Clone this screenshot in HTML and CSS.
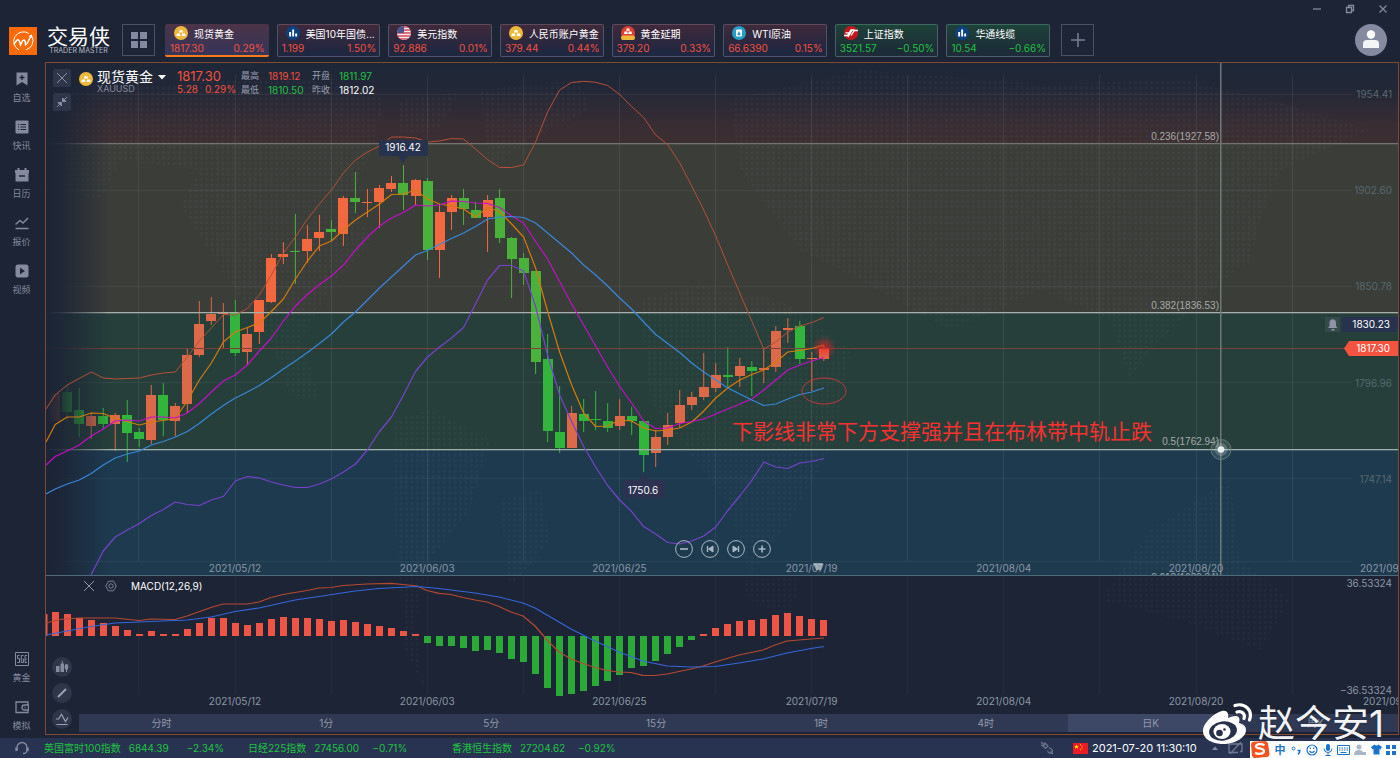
FILE: index.html
```html
<!DOCTYPE html>
<html lang="zh-CN">
<head>
<meta charset="utf-8">
<title>交易侠</title>
<link rel="stylesheet" href="styles.css">
</head>
<body>
<div class="app">
  <header class="header">
    <div class="titlebar">
      <button class="win-btn" aria-label="最小化"><svg width="10" height="10" viewBox="0 0 10 10"><path d="M1 5h8"/></svg></button>
      <button class="win-btn" aria-label="还原"><svg width="10" height="10" viewBox="0 0 10 10"><path d="M1.5 3.500h5v5h-5zM3.500 3.500v-2h5v5h-2"/></svg></button>
      <button class="win-btn" aria-label="关闭"><svg width="10" height="10" viewBox="0 0 10 10"><path d="M1.500 1.500l7 7M8.500 1.500l-7 7"/></svg></button>
    </div>
    <div class="toolbar">
      <div class="brand">
        <svg class="brand-mark" width="28" height="28" viewBox="0 0 28 28"><rect width="28" height="28" fill="#ff6a08"/><path d="M23 9.500A9.800 9.500 0 0 1 17 22.800M10 22.800A9.800 9.500 0 1 1 20 6.500" fill="none" stroke="#fff" stroke-width="1"/><path d="M5 17.500Q8 12 9.500 13t2 5.500q2-6 3.500-5.500t1.500 5Q19 16 22 8.500" fill="none" stroke="#fff" stroke-width="1.500" stroke-linejoin="round"/><path d="M19.500 9l3.500-1.500.2 3.800z" fill="#fff"/></svg>
        <div class="brand-text"><span class="brand-name">交易侠</span><span class="brand-sub">TRADER MASTER</span></div>
      </div>
      <button class="square-btn" aria-label="布局"><svg width="18" height="18" viewBox="0 0 18 18" fill="#8389a0"><path d="M1 1h7v7H1zM10 1h7v7h-7zM1 10h7v7H1zM10 10h7v7h-7z"/></svg></button>
      <nav class="tickers">
        <button class="ticker up current"><span class="t-top"><svg class="t-icon" viewBox="0 0 14 14"><use href="#i-gold"/></svg><span class="t-name">现货黄金</span></span><span class="t-row"><span>1817.30</span><span>0.29%</span></span></button>
        <button class="ticker up"><span class="t-top"><svg class="t-icon" viewBox="0 0 14 14"><use href="#i-bars"/></svg><span class="t-name">美国10年国债...</span></span><span class="t-row"><span>1.199</span><span>1.50%</span></span></button>
        <button class="ticker up"><span class="t-top"><svg class="t-icon" viewBox="0 0 14 14"><use href="#i-usa"/></svg><span class="t-name">美元指数</span></span><span class="t-row"><span>92.886</span><span>0.01%</span></span></button>
        <button class="ticker up"><span class="t-top"><svg class="t-icon" viewBox="0 0 14 14"><use href="#i-gold"/></svg><span class="t-name">人民币账户黄金</span></span><span class="t-row"><span>379.44</span><span>0.44%</span></span></button>
        <button class="ticker up"><span class="t-top"><svg class="t-icon" viewBox="0 0 14 14"><use href="#i-defer"/></svg><span class="t-name">黄金延期</span></span><span class="t-row"><span>379.20</span><span>0.33%</span></span></button>
        <button class="ticker up"><span class="t-top"><svg class="t-icon" viewBox="0 0 14 14"><use href="#i-oil"/></svg><span class="t-name">WTI原油</span></span><span class="t-row"><span>66.6390</span><span>0.15%</span></span></button>
        <button class="ticker down"><span class="t-top"><svg class="t-icon" viewBox="0 0 14 14"><use href="#i-sse"/></svg><span class="t-name">上证指数</span></span><span class="t-row"><span>3521.57</span><span>−0.50%</span></span></button>
        <button class="ticker down"><span class="t-top"><svg class="t-icon" viewBox="0 0 14 14"><use href="#i-bars"/></svg><span class="t-name">华通线缆</span></span><span class="t-row"><span>10.54</span><span>−0.66%</span></span></button>
      </nav>
      <button class="square-btn" aria-label="添加"><svg width="16" height="16" viewBox="0 0 16 16"><path d="M8 1v14M1 8h14" stroke="#7a8095" stroke-width="1.500"/></svg></button>
      <button class="avatar" aria-label="用户"><svg width="32" height="32" viewBox="0 0 32 32"><circle cx="16" cy="16" r="16" fill="#858aa1"/><circle cx="16" cy="10.500" r="4.200" fill="#fff"/><path d="M8 24v-4q0-4 4-4h8q4 0 4 4v4z" fill="#f3f4f6"/></svg></button>
    </div>
  </header>

  <div class="body">
    <nav class="sidebar">
      <a class="side-item" href="#watch"><svg width="14" height="14" viewBox="0 0 14 14"><path d="M1.500.5h11v13L7 10l-5.500 3.500z" fill="#858a9f"/><path d="M7 3v5M4.500 5.500h5" stroke="#1c2435" stroke-width="1.300"/></svg><span>自选</span></a>
      <a class="side-item" href="#news"><svg width="14" height="14" viewBox="0 0 14 14"><rect x=".5" y=".5" width="13" height="13" rx="1" fill="#858a9f"/><path d="M3 4.500h1.200M5.500 4.500H11M3 7h1.200M5.500 7H11M3 9.500h1.200M5.500 9.500H11" stroke="#1c2435" stroke-width="1.200"/></svg><span>快讯</span></a>
      <a class="side-item" href="#calendar"><svg width="14" height="14" viewBox="0 0 14 14"><path d="M0 5V2h2.500V0h2v2h5V0h2v2H14v3zM.5 5h13v8.500H.5z" fill="#858a9f"/><path d="M4 8h6" stroke="#1c2435" stroke-width="1.500"/></svg><span>日历</span></a>
      <a class="side-item" href="#quotes"><svg width="14" height="14" viewBox="0 0 14 14" fill="none" stroke="#858a9f" stroke-width="1.500"><path d="M.5 8.500l4.500-4 3 2.500 5-5M.5 12.500h13"/></svg><span>报价</span></a>
      <a class="side-item" href="#video"><svg width="14" height="14" viewBox="0 0 14 14"><rect x=".5" y=".5" width="13" height="13" rx="2.500" fill="#858a9f"/><path d="M5 3.800l5 3.200-5 3.200z" fill="#1c2435"/></svg><span>视频</span></a>
      <a class="side-item side-gap" href="#gold"><svg width="14" height="14" viewBox="0 0 14 14" fill="none" stroke="#858a9f" stroke-width="1"><path d="M.5.5h13v13H.5zM4.700 3.500H2.500v3h2v4H2.300M8.500 3.500H6.300v7h2.200V7H7.500M12 3.500h-2v7h2M10 7h1.800"/></svg><span>黄金</span></a>
      <a class="side-item" href="#sim"><svg width="14" height="14" viewBox="0 0 14 14" fill="none" stroke="#858a9f" stroke-width="1.300"><path d="M13 5V2H1v10.500h12V10M13.500 5H9.500a2.500 2.500 0 0 0 0 5h4zM9.500 7.500h1"/></svg><span>模拟</span></a>
    </nav>

    <main class="panel">
      <section class="price-pane">
        <svg id="price" class="chart" viewBox="46 63 1352 512" preserveAspectRatio="none" role="img" aria-label="现货黄金 日K"></svg>
        <div class="quote">
          <div class="quote-tools">
            <button class="tiny-btn" aria-label="关闭图表"><svg width="18" height="18" viewBox="0 0 18 18"><path d="M4 4l10 10M14 4L4 14"/></svg></button>
            <button class="tiny-btn" aria-label="缩小"><svg width="18" height="18" viewBox="0 0 18 18"><path d="M14 4l-3.500 3.500M4 14l3.500-3.500"/><path d="M9.500 5v3.500H13zM8.500 13V9.500H5z" fill="#8b90a5"/></svg></button>
          </div>
          <svg class="quote-icon" width="14" height="14" viewBox="0 0 14 14"><use href="#i-gold"/></svg>
          <div class="quote-name"><button class="symbol-btn">现货黄金<svg width="8" height="5" viewBox="0 0 8 5"><path d="M0 0h8L4 4.500z" fill="#fff"/></svg></button><span class="code">XAUUSD</span></div>
          <div class="quote-last red"><span class="last">1817.30</span><span class="chg"><span>5.28</span><span>0.29%</span></span></div>
          <dl class="ohlc">
            <dt>最高</dt><dd class="red">1819.12</dd><dt>开盘</dt><dd class="green">1811.97</dd>
            <dt>最低</dt><dd class="green">1810.50</dd><dt>昨收</dt><dd>1812.02</dd>
          </dl>
        </div>
        <div class="zoomer">
          <button aria-label="缩小图表"><svg width="18" height="18" viewBox="0 0 18 18"><circle cx="9" cy="9" r="8.400"/><path d="M5 9h8" stroke-width="1.600"/></svg></button>
          <button aria-label="向左"><svg width="18" height="18" viewBox="0 0 18 18"><circle cx="9" cy="9" r="8.400"/><path d="M6.500 6v6" stroke-width="1.400"/><path d="M12 6v6L7.500 9z" fill="#a9b8c4"/></svg></button>
          <button aria-label="向右"><svg width="18" height="18" viewBox="0 0 18 18"><circle cx="9" cy="9" r="8.400"/><path d="M11.500 6v6" stroke-width="1.400"/><path d="M6 6v6l4.500-3z" fill="#a9b8c4"/></svg></button>
          <button aria-label="放大图表"><svg width="18" height="18" viewBox="0 0 18 18"><circle cx="9" cy="9" r="8.400"/><path d="M5.500 9h7M9 5.500v7" stroke-width="1.600"/></svg></button>
        </div>
      </section>

      <section class="macd-pane">
        <svg id="macd" class="chart" viewBox="46 576 1352 138" preserveAspectRatio="none" role="img" aria-label="MACD"></svg>
        <div class="macd-head">
          <button class="plain" aria-label="移除指标"><svg width="12" height="12" viewBox="0 0 12 12" stroke="#9298ab" fill="none"><path d="M1 1l10 10M11 1L1 11"/></svg></button>
          <button class="plain" aria-label="设置"><svg width="12" height="12" viewBox="0 0 12 12" stroke="#7c8297" fill="none"><path d="M3.500 1.200h5L11.300 6l-2.800 4.800h-5L.7 6z"/><circle cx="6" cy="6" r="2.200"/></svg></button>
          <span>MACD(12,26,9)</span>
        </div>
        <div class="draw-tools">
          <button aria-label="图表类型"><svg width="20" height="20" viewBox="0 0 20 20" fill="#858a9f"><path d="M4 9h3.500v6H4zM8.500 6.500H12V15H8.500zM9.800 4h1v3h-1z"/><ellipse cx="14.500" cy="10" rx="1.800" ry="3"/><path d="M14 12h1v3h-1z"/></svg></button>
          <button aria-label="画线"><svg width="20" height="20" viewBox="0 0 20 20"><path d="M6 14l8-8" stroke="#9ba0b2" stroke-width="2"/></svg></button>
          <button aria-label="指标"><svg width="20" height="20" viewBox="0 0 20 20" fill="none" stroke="#9ba0b2" stroke-width="1.200"><path d="M4 10h2.500l3-4.500 4 7 2.500-4M4.500 15.500h11"/></svg></button>
        </div>
      </section>

      <nav class="periods">
        <button>分时</button><button>1分</button><button>5分</button><button>15分</button><button>1时</button><button>4时</button><button class="on">日K</button><button>周K</button>
      </nav>
    </main>
  </div>

  <footer class="status">
    <svg class="headset" width="14" height="14" viewBox="0 0 14 14" fill="none" stroke="#858a9f" stroke-width="1.300"><path d="M2 9V6.500a5 5 0 0 1 10 0V9c0 2.500-1.500 3.500-4 3.500"/><path d="M1.500 6.500v3.500M12.500 6.500v3.500" stroke-width="2.400"/></svg>
    <div class="indices">
      <div class="index"><span>英国富时100指数</span><span class="val">6844.39</span><span>−2.34%</span></div>
      <div class="index"><span>日经225指数</span><span class="val">27456.00</span><span>−0.71%</span></div>
      <div class="index"><span>香港恒生指数</span><span class="val">27204.62</span><span>−0.92%</span></div>
    </div>
    <div class="clock">
      <svg class="plug" width="14" height="14" viewBox="0 0 14 14" fill="none" stroke="#727990" stroke-width="1.100"><path d="M1 1l2.500 2.500M3 5l2.500-2.500 2.500 2.500L5.500 7.500zM4 1.500l1 2M1 4l2 1M8 9.500a2.200 2.200 0 1 0 3-1.500L9 6.500M10.500 10.500L13 13"/></svg>
      <svg width="15" height="11" viewBox="0 0 15 11"><path d="M0 0h15v11H0z" fill="#ec1c24"/><path d="M3.500 1.500l.7 1.500 1.600.1-1.200 1 .4 1.600-1.500-.9L2 5.700l.4-1.600-1.200-1 1.600-.1zM7 1.200h1v1H7zM8.500 2.800h1v1h-1zM8.500 4.800h1v1h-1zM7 6.200h1v1H7z" fill="#ffde00"/></svg>
      <time>2021-07-20 11:30:10</time>
      <svg width="6" height="4" viewBox="0 0 6 4"><path d="M0 4l3-3.500L6 4z" fill="#858a9f"/></svg>
      <svg width="15" height="12" viewBox="0 0 15 12" fill="none" stroke="#727990" stroke-width="1.300"><path d="M3 2h11v7.500h-2M9 2H1v8.500h9M2 12L13 0"/></svg>
    </div>
    <div class="ime">
      <svg class="sogou" width="20" height="17" viewBox="0 0 20 17"><path d="M1 3.500Q1 1 3.500.7L15 0q2.500 0 3 2.500L19.500 13q.2 2.500-2.500 3L5 17q-2.500.2-3-2.500z" fill="#f4511e"/><path d="M14.500 4.200C11 2.200 5.500 3 6 5.700c.4 2.300 8 1.300 8 4.300 0 3.200-6 3.500-9 1.700" fill="none" stroke="#fff" stroke-width="2.300"/></svg>
      <span class="ime-zh">中</span>
      <svg width="12" height="12" viewBox="0 0 12 12"><circle cx="3.500" cy="4.500" r="1.500" fill="none" stroke="#1b74c9"/><path d="M7.500 6.500h2.300c0 2-.6 3-1.800 3.800" fill="none" stroke="#1b74c9" stroke-width="1.600"/></svg>
      <svg width="12" height="12" viewBox="0 0 12 12" fill="none" stroke="#1b74c9" stroke-width="1.200"><circle cx="6" cy="6" r="5"/><path d="M3.500 7q2.500 3 5 0M4.300 3.500v1.500M7.700 3.500v1.500"/></svg>
      <svg width="10" height="12" viewBox="0 0 10 12"><rect x="3" y="0" width="4" height="7" rx="2" fill="#1b74c9"/><path d="M1 4.500q0 4 4 4t4-4M5 8.500V11M2.500 11.500h5" fill="none" stroke="#1b74c9"/></svg>
      <svg width="13" height="10" viewBox="0 0 13 10"><path d="M.5.5h12v9H.5z" fill="none" stroke="#1b74c9"/><path d="M2 3h9M2 5h9" stroke="#1b74c9" stroke-dasharray="1.500 1"/><path d="M3.500 7.500h6" stroke="#1b74c9"/></svg>
      <svg width="12" height="12" viewBox="0 0 12 12" fill="#a9b6cc"><circle cx="5" cy="3" r="2.500"/><path d="M0 11q0-5 5-5 3 0 4 2h3v3z"/></svg>
      <svg width="11" height="11" viewBox="0 0 11 11"><path d="M3.500.5q2 2 4 0L11 3 9.500 5.500l-1-.5v5.500h-6V5l-1 .5L0 3z" fill="#1b74c9"/></svg>
      <svg width="10" height="10" viewBox="0 0 10 10" fill="#1b74c9"><path d="M0 0h4v4H0zM6 0h4v4H6zM0 6h4v4H0zM6 6h4v4H6z"/></svg>
    </div>
  </footer>

  <div class="watermark">
    <svg width="50" height="42" viewBox="0 0 50 42"><path d="M19 8C11 10 0 20 0 28c0 9 11 13 20 13 13 0 23-7 23-14 0-4-3-6-7-7 2-7-2-9-11-5 1-5-1-8-6-7z" fill="#fff"/><ellipse cx="20" cy="28" rx="14" ry="9.500" transform="rotate(-8 20 28)" fill="#27304a"/><ellipse cx="19" cy="28.500" rx="8.500" ry="7.500" fill="#fff"/><circle cx="16.500" cy="30" r="3.300" fill="#27304a"/><circle cx="21.500" cy="26.500" r="1.300" fill="#27304a"/><path d="M32 2.500C42-.5 50 7 46.500 17M34 9c5-1.500 8.500 2 7 6.500" fill="none" stroke="#fff" stroke-width="3.200" stroke-linecap="round"/></svg>
    <span>赵今安1</span>
  </div>
</div>

<svg width="0" height="0" class="defs" aria-hidden="true">
  <symbol id="i-gold" viewBox="0 0 14 14"><circle cx="7" cy="7" r="7" fill="#eeb83c"/><path d="M5.700 4h2.600l.8 2.500H4.900zM3 7.500h2.800l.7 2.500H2.300zM8.200 7.500H11l.7 2.500H7.500z" fill="#fff"/></symbol>
  <symbol id="i-bars" viewBox="0 0 14 14"><circle cx="7" cy="7" r="7" fill="#0d4180"/><path d="M3.200 6h1.900v4.500H3.200zM6.200 3.500h1.900v7H6.200zM9.200 7.500h1.900v3H9.200z" fill="#fff"/></symbol>
  <symbol id="i-usa" viewBox="0 0 14 14"><clipPath id="c-usa"><circle cx="7" cy="7" r="7"/></clipPath><g clip-path="url(#c-usa)"><path d="M0 0h14v14H0z" fill="#f3e9ec"/><path d="M0 1h14M0 4h14M0 7h14M0 10h14M0 13h14" stroke="#d6455a" stroke-width="1.500"/><path d="M0 0h7v7H0z" fill="#4a5590"/></g></symbol>
  <symbol id="i-defer" viewBox="0 0 14 14"><circle cx="7" cy="7" r="7" fill="#dc4034"/><path d="M5.800 2.500h2.400l.6 2.300H5.200zM3.500 5.500h2.800l.5 2.500H3zM7.700 5.500h2.800L11 8H7.200z" fill="#fff"/><rect x="0" y="9.500" width="14" height="4.500" rx="2" fill="#eeb83c"/></symbol>
  <symbol id="i-oil" viewBox="0 0 14 14"><circle cx="7" cy="7" r="7" fill="#26a0c4"/><rect x="4" y="3.500" width="6" height="7" rx="1" fill="#fff"/><path d="M7 5l1.300 2.500a1.400 1.400 0 1 1-2.600 0z" fill="#26a0c4"/></symbol>
  <symbol id="i-sse" viewBox="0 0 14 14"><circle cx="7" cy="7" r="7" fill="#c4161c"/><path d="M0 9.500h3.500L7 4h3.500M4 11l4-6.500M7 9.500L10.500 4.500H14M1.500 6.800H5" fill="none" stroke="#fff" stroke-width="1.300"/></symbol>
</svg>
<script src="chart.js"></script>
</body>
</html>
```
FILE: styles.css
```css
* { box-sizing: border-box; }
body { margin: 0; background: #1c2435; color: #fff; font: 10px/14px Inter, "Noto Sans CJK SC", sans-serif; }
button { margin: 0; padding: 0; border: 0; background: none; color: inherit; font: inherit; }
a { color: inherit; text-decoration: none; }
svg { display: block; flex: none; }
.defs { position: absolute; }
.red { color: #f4503c; }
.green { color: #1fc240; }

.app { position: relative; display: flex; flex-direction: column; height: 100vh; min-height: 600px; overflow: hidden; }
.header { height: 62px; }
.titlebar { display: flex; justify-content: flex-end; gap: 23px; height: 24px; padding: 4px 12px 0 0; }
.win-btn { height: 10px; }
.win-btn svg { fill: none; stroke: #858a9f; stroke-width: 1.3; }
.toolbar { display: flex; align-items: flex-start; padding: 0 13px 0 9px; }
.brand { display: flex; gap: 10px; width: 113px; padding-top: 3px; }
.brand-text { display: flex; flex-direction: column; align-items: center; }
.brand-name { font-size: 21px; line-height: 20px; font-weight: 400; }
.brand-sub { font-size: 7px; line-height: 8px; color: #b9bdc9; white-space: nowrap; }
.square-btn { display: flex; flex: none; align-items: center; justify-content: center; width: 33px; height: 32px; border: 1px solid #4a5165; }
.tickers { display: flex; gap: 8px; flex: 0 1 885px; margin: 0 11px 0 10px; }
.ticker { flex: 1 1 0; min-width: 0; height: 33px; padding: 0 3px 0 4px; border: 1px solid #5a5f73; border-radius: 2px; text-align: left; }
.ticker.up { background: linear-gradient(#40293b, #202741 85%); color: #f4503c; border-color: #5f4a5b #4d5467 #4d5467; }
.ticker.down { background: linear-gradient(#1d4238, #1d2c38 85%); color: #1fc240; border-color: #3d6a60 #4d5f6b #4d5f6b; }
.ticker.current { background: linear-gradient(#4c3347, #34365a); border: 0; border-bottom: 2px solid #ff7a1c; padding: 1px 4px 0 5px; }
.t-top { display: flex; align-items: center; gap: 6px; height: 15px; padding-left: 4px; color: #fff; }
.t-icon { width: 14px; height: 14px; }
.t-name { white-space: nowrap; padding-top: 3px; }
.t-row { display: flex; justify-content: space-between; line-height: 16px; }
.avatar { margin-left: auto; }

.body { display: flex; flex: 1; min-height: 0; padding-right: 1px; }
.sidebar { display: flex; flex-direction: column; width: 45px; padding: 10px 2px 6px 0; }
.side-item { display: flex; flex-direction: column; align-items: center; gap: 5px; height: 48px; font-size: 9px; color: #858a9f; }
.side-gap { margin-top: auto; }
.side-item:last-child { height: 32px; }
.panel { display: flex; flex: 1; flex-direction: column; min-width: 0; border: 1px solid #83492f; margin-bottom: 3px; }
.price-pane { position: relative; flex: 1; min-height: 0; border-bottom: 1px solid #4f6a78; }
.macd-pane { position: relative; flex: 0 0 138px; }
.chart { position: absolute; inset: 0; width: 100%; height: 100%; }

.quote { position: relative; display: flex; align-items: flex-start; padding: 6px 7px; }
.quote-tools { display: grid; gap: 6px; }
.tiny-btn { background: #30364a; border-radius: 2px; }
.tiny-btn svg { fill: none; stroke: #8b90a5; }
.quote-icon { margin: 3px 4px 0 8px; }
.quote-name { display: flex; flex-direction: column; width: 80px; }
.symbol-btn { display: flex; align-items: center; gap: 5px; font-size: 14px; line-height: 16px; white-space: nowrap; }
.code { font-size: 9px; line-height: 8px; color: #858a9f; }
.quote-last { width: 64px; }
.last { display: block; font-size: 13px; line-height: 14px; }
.chg { display: flex; gap: 7px; line-height: 12px; }
.ohlc { display: grid; grid-template-columns: 27px 44px 27px 44px; margin: 0; line-height: 14px; }
.ohlc dt { color: #9a9fb0; font-size: 9px; }
.ohlc dd { margin: 0; font-size: 10px; }
.zoomer { position: absolute; left: 629px; bottom: 17px; display: flex; gap: 8px; }
.zoomer svg { fill: none; stroke: #a9b8c4; }
.macd-head { position: absolute; left: 37px; top: 3px; display: flex; align-items: center; gap: 10px; }
.macd-head span { padding-left: 4px; }
.draw-tools { position: absolute; left: 6px; top: 81px; display: grid; gap: 6px; z-index: 1; }
.draw-tools button { background: #30364a; border-radius: 50%; }
.periods { display: grid; grid-template-columns: repeat(8, 1fr); height: 18px; margin: 0 0 2px 33px; background: #2f3953; color: #9398aa; }
.periods .on { background: #3d4766; }

.status { display: flex; align-items: center; height: 20px; background: #273350; }
.headset { margin: 0 8px 0 15px; padding: 0; }
.indices { display: flex; padding-left: 7px; color: #1fc240; }
.index { display: flex; gap: 8px; width: 204px; white-space: nowrap; }
.index .val { width: 50px; }
.clock { display: flex; align-items: center; margin-left: auto; padding-right: 7px; gap: 4px; }
.clock .plug { margin-right: 15px; }
.clock time { width: 106px; font-size: 11px; white-space: nowrap; margin-right: 10px; }
.clock svg:last-child { margin-left: 6px; }
.ime { display: flex; align-items: center; justify-content: space-between; align-self: flex-end; flex: 0 0 150px; height: 17px; padding-right: 4px; background: #fff; color: #1b74c9; }
.ime-zh { font-size: 11px; font-weight: 700; }
.watermark { position: absolute; right: 16px; bottom: 13px; display: flex; align-items: center; gap: 5px; font-size: 37px; line-height: 42px; color: #f2f3f6; text-shadow: 0 0 2px #1c2435; pointer-events: none; }

.t-axis { font: 10px Inter, sans-serif; fill: #8d97a6; }
.t-scale { font: 10px Inter, sans-serif; fill: #56696f; }
.t-fib { font: 10px Inter, sans-serif; fill: #a6aaa8; }
.t-fib { font-family: "Liberation Sans", sans-serif; }
.t-tag { font: 10px Inter, sans-serif; fill: #fff; }
.t-note { font: 21px "Noto Sans CJK SC", sans-serif; fill: #f8312f; }
```
FILE: chart.js
```js
const NS = 'http://www.w3.org/2000/svg';
const X0 = 55.2, STEP = 12.01;
const cx = i => X0 + STEP * i;

function add(parent, tag, attrs, text) {
  const el = document.createElementNS(NS, tag);
  for (const k in attrs) el.setAttribute(k, attrs[k]);
  if (text) el.textContent = text;
  parent.appendChild(el);
  return el;
}
function defs(svg, id) {
  const d = add(svg, 'defs', {});
  d.innerHTML =
    `<linearGradient id="${id}-top" x1="0" x2="0" y1="0" y2="1"><stop offset="0" stop-color="#1d2738"/><stop offset=".3" stop-color="#222737"/><stop offset=".75" stop-color="#372d33"/><stop offset="1" stop-color="#3d2f32"/></linearGradient>
     <linearGradient id="${id}-left"><stop offset="0" stop-color="#1c2435"/><stop offset=".25" stop-color="#1c2435" stop-opacity=".85"/><stop offset="1" stop-color="#1c2435" stop-opacity="0"/></linearGradient>
     <radialGradient id="${id}-glow"><stop offset="0" stop-color="#ff2020" stop-opacity=".7"/><stop offset="1" stop-color="#ff2020" stop-opacity="0"/></radialGradient>
     <pattern id="${id}-dots" width="5.4" height="5.4" patternUnits="userSpaceOnUse"><rect width="3" height="3" rx="1" fill="#8fa3a8" fill-opacity=".055"/></pattern>`;
}
const land = [
  '62,90 170,84 260,78 350,84 385,100 372,150 350,200 372,240 330,290 300,340 320,400 290,395 270,340 215,260 180,205 200,170 120,160 100,200 62,190',
  '400,100 460,92 440,130 400,135', '480,90 580,80 590,110 530,140 490,170',
  '395,420 430,410 490,440 470,510 430,560 415,620 425,690 405,650 395,520',
  '640,300 700,285 780,300 850,350 835,440 790,520 750,575 725,500 650,400',
  '730,100 860,70 1040,84 1180,80 1270,100 1370,130 1280,170 1260,220 1250,260 1200,300 1150,350 1130,380 1110,320 1040,290 950,330 860,280 800,250 740,170',
  '1150,530 1230,480 1240,560 1290,600 1260,650 1180,620 1100,600', '500,500 540,490 550,540 510,590', '740,580 800,578 790,620 750,600'
];
const V = Array.from({ length: 13 }, (_, k) => 138.9 + 96.1 * k);
const dates = ['2021/05/12', '2021/06/03', '2021/06/25', '2021/07/19', '2021/08/04', '2021/08/20'];

// Each row: colour, body top, body bottom, high, low (screen scale)
const candles = `r 393 421 393 421|g 392 412 386 422|g 410 424 388 437|r 416 426 412 439|g 416 424 408 429|r 415 424 413 451|g 415 433 400 462|g 432 439 428 447|r 395 440 385 444|g 395 420 383 436|r 406 421 403 436|r 355 404 348 413|r 324 355 301 357|r 314 321 297 325|r 313 314 303 348|g 313 353 300 356|r 334 352 327 365|r 300 332 300 344|r 258 302 254 303|r 254 257 242 264|g 251 252 214 284|r 239 251 225 263|r 232 238 215 251|g 229 232 220 241|r 198 234 196 246|g 198 202 172 213|r 202 203 189 217|r 188 202 185 228|r 183 189 176 192|g 183 195 165 210|r 180 196 179 205|g 181 250 178 260|r 212 250 204 278|r 198 212 195 230|g 198 209 189 225|g 210 218 202 218|r 200 217 195 252|g 198 238 189 243|g 238 259 237 298|g 258 273 253 285|g 271 362 271 374|g 359 431 334 442|g 432 448 386 453|r 413 448 406 448|g 414 421 399 432|g 419 420 391 430|g 421 428 403 432|r 416 426 399 430|g 416 421 407 435|g 421 455 421 472|r 437 453 430 467|r 425 437 413 445|r 405 423 390 428|r 397 405 392 410|r 387 397 353 400|r 375 388 363 392|g 375 377 347 387|r 366 376 358 387|g 367 371 361 396|r 368 370 349 383|r 331 367 326 372|r 328 330 318 343|g 326 359 321 364|r 358 359 352 391|r 349 359 346 361`.split('|').map(r => r.split(' '));

// First value sits on the left edge, the rest on successive candles
const upper = [409,395,385,378.5,372,378,379,378.5,378,375,373,372,357,341,328,314.5,315,308.5,295,275,253,237,219,204,190,173,160,152,146,137,137,138,142,141,138.5,139,149,159.5,167.5,167.5,165,142,112,90,82.5,81.3,82.3,85.5,94.5,106.5,117.5,135,144.500,163,186,210,236,265,293,321,349,342,332,326,322.5,317.5];
const fast = [442,424.5,417,417,413,413.5,418.5,421.5,425,422,420.5,418.5,401,380,363,342,332,327.5,323,311.5,299,279,261,246,241,230,220,212,204,194.5,194,190,199,204,206,209,217,207.5,211.5,224,237,268,311.5,352,385,413,426.5,426,420,421,428,431,430,428,422,411,398,388,380,374.5,370,362,352,350.5,348.5,345];
const mid = [465,456.5,451,445,436,429,421,420,421,417,417,418,413,403.5,392,381,375,365,351,338,321,306,294.5,284.5,276,265,250,237,226,218,212.5,205,206,205,201,201.5,203,203.5,207.5,216,223,241.5,259,281.5,304,325,346,367,386.5,403,421,428.5,428,423.5,421.5,419,414,409,404,399,390,380,370,365,361,357.5];
const slow = [494,489,484,480,473.5,465,458,454,451,445,441.5,437,431.5,423.5,414,405.5,398,392,385.5,377.5,369,361,352.5,343.5,334,322,312,300,288,277,266,255,250.5,244.5,238.5,233,226.5,219,217,216.5,217.5,223,233,243,253,265,275,286,298,309,322,334.5,343.5,352.5,363,372,380,388,394,400,405.5,404,399,394.5,392,388];
const lower = [551,537,530,523.5,515.5,509.5,502,504.5,505.5,500,496.5,481,476.5,478,482,485,487.5,487.5,484,479,472,464,450,431.5,417,395,371.5,357,347,338,327.5,304,280,265.5,265.5,271,306.5,355,395,421.5,446.5,467,485.5,500,511.5,526.5,534,542.5,544,541,536,527,510.5,496,480.5,462,467,468.5,463,461.5,458.5];

const fromEdge = a => a.map((y, k) => `${k ? cx(k - 1) : 46},${y}`).join(' ');
const line = (svg, points, stroke, w) => add(svg, 'polyline', { points, stroke, fill: 'none', 'stroke-width': w || 1.2, 'stroke-linejoin': 'round' });
const rect = (svg, x, y, width, height, fill) => add(svg, 'rect', { x, y, width, height, fill });
const text = (svg, x, y, cls, s, anchor) => add(svg, 'text', { x, y, class: cls, 'text-anchor': anchor || 'middle' }, s);

function drawPrice() {
  const s = document.getElementById('price');
  defs(s, 'p');
  rect(s, 46, 63, 1352, 81, 'url(#p-top)');
  rect(s, 46, 144, 1352, 168, '#3b3d39');
  rect(s, 46, 312, 1352, 138, '#263f3b');
  rect(s, 46, 450, 1352, 125, '#1d3a4f');
  land.forEach(points => add(s, 'polygon', { points, fill: 'url(#p-dots)' }));
  V.forEach(x => rect(s, Math.floor(x), 75, 1, 486, 'rgba(170,190,190,.11)'));
  [94, 190, 286, 382, 478, 561].forEach(y => rect(s, 46, y, 1306, 1, 'rgba(170,190,190,.09)'));
  candles.forEach(([c, t, b, h, l], i) => {
    const f = c === 'r' ? (t < 305 ? '#f4683f' : '#dd6948') : (t < 300 ? '#4ab23a' : '#31b53a');
    rect(s, cx(i) - .5, +h, 1, Math.max(1, l - h), f);
    rect(s, Math.round(cx(i) - 5), +t, 10, Math.max(1, b - t), f);
  });
  [[143, '#71746f'], [312, '#a8aea9'], [449, '#9fb0a9']].forEach(([y, f]) => rect(s, 46, y, 1352, 1.3, f));
  rect(s, 46, 348, 1300, 1, '#7c4038');
  rect(s, 46, 63, 64, 512, 'url(#p-left)');
  line(s, fromEdge(upper), '#b64f36', 1);
  line(s, fromEdge(fast), '#d57b0c');
  line(s, fromEdge(mid), '#c40fc8');
  line(s, fromEdge(slow), '#3888dc');
  line(s, '91,575 ' + lower.map((y, k) => `${cx(k + 4)},${y}`).join(' '), '#7842cc');
  add(s, 'circle', { cx: 824, cy: 348, r: 12, fill: 'url(#p-glow)' });
  add(s, 'ellipse', { cx: 824, cy: 391, rx: 22, ry: 13, fill: 'none', stroke: '#c23a38' });
  text(s, 732, 439, 't-note', '下影线非常下方支撑强并且在布林带中轨止跌', 'start');
  add(s, 'path', { d: 'M379 140h49v16h-20l-5 7-5-7h-19z', fill: '#26324e' });
  text(s, 403, 151, 't-tag', '1916.42');
  add(s, 'path', { d: 'M623 480h16l4-7 5 7h17v18h-42z', fill: '#2c3250' });
  text(s, 643, 494, 't-tag', '1750.6');
  rect(s, 1220, 63, 1.500, 512, '#6d7878');
  text(s, 1219, 140, 't-fib', '0.236(1927.58)', 'end');
  text(s, 1219, 309, 't-fib', '0.382(1836.53)', 'end');
  text(s, 1219, 445, 't-fib', '0.5(1762.94)', 'end');
  text(s, 1219, 581, 't-fib', '0.618(1689.34)', 'end');
  add(s, 'circle', { cx: 1221, cy: 449.5, r: 10, fill: 'rgba(200,215,215,.12)', stroke: '#63797c' });
  add(s, 'circle', { cx: 1221, cy: 449.5, r: 6.500, fill: 'rgba(200,215,215,.25)' });
  add(s, 'circle', { cx: 1221, cy: 449.5, r: 3.300, fill: '#e9eeee' });
  [['1954.41', 98], ['1902.60', 194], ['1850.78', 290], ['1796.96', 387], ['1747.14', 483]].forEach(([t, y]) => text(s, 1392, y, 't-scale', t, 'end'));
  dates.forEach((d, k) => text(s, 235 + 192.2 * k, 572, 't-axis', d));
  text(s, 1360, 572, 't-axis', '2021/09/07', 'start');
  add(s, 'path', { d: 'M813 563h10l-2 7h-5z', fill: '#c5d0d6', opacity: .7 });
  rect(s, 1325, 317, 15, 15, '#344a4b');
  add(s, 'path', { d: 'M1328 328l1.500-2v-3a3 3.500 0 0 1 6.500 0v3l1.500 2zM1331.500 329h3v1.500h-3z', fill: '#8d93a4' });
  rect(s, 1342, 317, 56, 15, '#26324e');
  text(s, 1390, 328, 't-tag', '1830.23', 'end');
  add(s, 'path', { d: 'M1344 348.500l5-7.500h49v15h-49z', fill: '#f4533f' });
  text(s, 1390, 352, 't-tag', '1817.30', 'end');
}

const bars = [612,614,618,620,623,626,630,634,631,634,634,629,623,618,618,623,625,623,619,617,618,618,619,621,620,622,624,626,628,631,634,643,646,646,648,651,650,653,659,662,674,688,696,694,691,686,681,675,668,666,661,654,647,640,634,628,624,621,620,619,615,613,616,619,620];
function drawMacd() {
  const s = document.getElementById('macd');
  defs(s, 'm');
  land.forEach(points => add(s, 'polygon', { points, fill: 'url(#m-dots)' }));
  V.forEach(x => rect(s, Math.floor(x), 576, 1, 119, 'rgba(170,190,210,.06)'));
  rect(s, 46, 614, 1.500, 22, '#ef5545');
  bars.forEach((y, i) => rect(s, Math.round(cx(i) - 3.5), Math.min(y, 636), 7, Math.abs(y - 636), y < 636 ? '#ef5545' : '#2aab38'));
  line(s, '46,623 60,619.5 79,618 115,618 139,620.5 151,619 175,619.5 187,616 211,607.5 223,604 247,604 259,602 271,597.5 283,594.5 307,590.5 319,588 331,587.5 343,585.5 367,584 391,583.3 403,584.500 417,586 427,590.5 439,593.3 451,594.5 463,597.5 475,600 487,602 499,606.5 511,612 523,616 535,626 547,640 559,652 571,659 583,663.5 595,667.5 607,670.5 619,672 631,672.5 643,675.3 655,675.5 667,674 691,669 703,666 715,662 727,658.5 739,655 751,652.5 763,650 775,645 787,641 811,639 824,638', '#b8492f');
  line(s, '46,635 67,631 91,626.5 115,623 151,621.5 187,620 211,617 235,611.5 259,608 295,600 319,596.5 355,591 379,588.5 417,586.5 439,588.5 475,593 499,597 523,603 535,608 547,615 571,629 595,641 619,652 643,661 667,666 691,667 715,666.5 739,663 763,659 787,653 811,648.5 824,646.5', '#3567dd');
  text(s, 1392, 587, 't-axis', '36.53324', 'end');
  text(s, 1392, 694, 't-axis', '−36.53324', 'end');
  dates.forEach((d, k) => text(s, 235 + 192.2 * k, 705, 't-axis', d));
  text(s, 1363, 705, 't-axis', '2021/09/07', 'start');
}
drawPrice();
drawMacd();
```
